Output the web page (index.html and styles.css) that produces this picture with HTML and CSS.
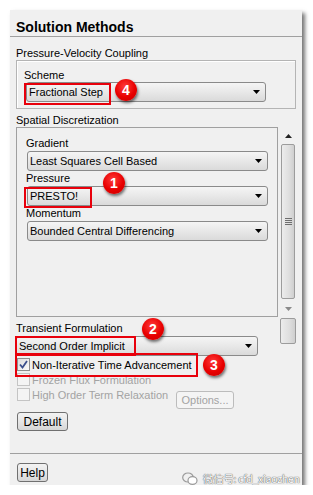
FILE: index.html
```html
<!DOCTYPE html>
<html lang="en">
<head>
    <meta charset="UTF-8">
    <title>Solution Methods</title>
    <link rel="stylesheet" href="styles.css">
</head>
<body>

<div class="panel">
    <div class="title">Solution Methods</div>

    <div class="content">
        <div class="label section">Pressure-Velocity Coupling</div>
        <div class="group">
            <div class="label">Scheme</div>
            <div class="select scheme">
                <span>Fractional Step</span>
                <svg class="arrow" width="7" height="4" viewBox="0 0 7 4"><polygon points="0,0 7,0 3.5,4" fill="#000"/></svg>
            </div>
        </div>

        <div class="label spatial-title">Spatial Discretization</div>
        <div class="scroll-box">
            <div class="scroll-area">
                <div class="field">
                    <div class="label">Gradient</div>
                    <div class="select">
                        <span>Least Squares Cell Based</span>
                        <svg class="arrow" width="7" height="4" viewBox="0 0 7 4"><polygon points="0,0 7,0 3.5,4" fill="#000"/></svg>
                    </div>
                </div>
                <div class="field">
                    <div class="label">Pressure</div>
                    <div class="select">
                        <span>PRESTO!</span>
                        <svg class="arrow" width="7" height="4" viewBox="0 0 7 4"><polygon points="0,0 7,0 3.5,4" fill="#000"/></svg>
                    </div>
                </div>
                <div class="field">
                    <div class="label">Momentum</div>
                    <div class="select">
                        <span>Bounded Central Differencing</span>
                        <svg class="arrow" width="7" height="4" viewBox="0 0 7 4"><polygon points="0,0 7,0 3.5,4" fill="#000"/></svg>
                    </div>
                </div>
            </div>
            <div class="scrollbar">
                <div class="sb-btn">
                    <svg width="7" height="4" viewBox="0 0 7 4"><polygon points="0,4 7,4 3.5,0" fill="#222"/></svg>
                </div>
                <div class="sb-thumb">
                    <span class="grip"></span>
                </div>
                <div class="sb-btn">
                    <svg width="7" height="4" viewBox="0 0 7 4"><polygon points="0,0 7,0 3.5,4" fill="#8a8a8a"/></svg>
                </div>
            </div>
        </div>

        <div class="label transient">Transient Formulation</div>
        <div class="select transient-select">
            <span>Second Order Implicit</span>
            <svg class="arrow" width="7" height="4" viewBox="0 0 7 4"><polygon points="0,0 7,0 3.5,4" fill="#000"/></svg>
        </div>

        <div class="checks">
            <div class="check">
                <span class="box">
                    <svg width="9" height="9" viewBox="0 0 9 9"><path d="M1 4.5 L3.5 7.5 L8 1" fill="none" stroke="#3b4f8c" stroke-width="1.8"/></svg>
                </span>
                <span>Non-Iterative Time Advancement</span>
            </div>
            <div class="check disabled">
                <span class="box"></span>
                <span>Frozen Flux Formulation</span>
            </div>
            <div class="check disabled">
                <div class="check-label">
                    <span class="box"></span>
                    <span>High Order Term Relaxation</span>
                </div>
                <button class="btn options">Options...</button>
            </div>
        </div>

        <button class="btn default">Default</button>
    </div>

    <div class="footer">
        <button class="btn help">Help</button>
    </div>

    <!-- outer panel scrollbar piece -->
    <div class="outer-thumb"></div>

    <!-- annotations -->
    <div class="mark mark-4"></div>
    <div class="mark mark-1"></div>
    <div class="mark mark-2"></div>
    <div class="mark mark-3"></div>
    <div class="badge badge-4">4</div>
    <div class="badge badge-1">1</div>
    <div class="badge badge-2">2</div>
    <div class="badge badge-3">3</div>

    <div class="watermark">
        <svg width="16" height="14" viewBox="0 0 16 14">
            <ellipse cx="6" cy="5.5" rx="5.3" ry="4.5" fill="none" stroke="#9a9a9a" stroke-width="1.2"/>
            <ellipse cx="10.5" cy="8.5" rx="4.5" ry="3.8" fill="#fff" stroke="#9a9a9a" stroke-width="1.2"/>
        </svg>
        <span>微信号: cfd_xiaozhen</span>
    </div>
</div>

</body>
</html>
```

FILE: styles.css
```css
body {
    margin: 0;
    background: #fff;
    font-family: "Liberation Sans", Arial, sans-serif;
    font-size: 11px;
    color: #000;
}

.panel {
    position: relative;
    margin: 10px 0 0 10px;
    width: 292px;
    height: 475px;
    background: #f0f0f0;
    box-shadow: 3px 3px 4px rgba(0, 0, 0, 0.55);
    display: flex;
    flex-direction: column;
}

.title {
    height: 27px;
    box-sizing: border-box;
    padding: 9px 0 0 6px;
    line-height: 16px;
    font-size: 14px;
    font-weight: bold;
    border-bottom: 1px solid #a0a0a0;
}

.content {
    flex: 1;
    padding: 0 6px;
}

.label {
    line-height: 14px;
    white-space: nowrap;
}

.label.section {
    margin-top: 9px;
}

.group {
    height: 49px;
    box-sizing: border-box;
    border: 1px solid #b4b4b4;
    box-shadow: inset 1px 1px 0 #fff;
    padding: 7px 0 0 7px;
}

.select {
    height: 20px;
    box-sizing: border-box;
    border: 1px solid #8a8a8a;
    border-radius: 3px;
    background: linear-gradient(#f5f5f5, #e8e8e8 50%, #dadada);
    display: flex;
    align-items: center;
    justify-content: space-between;
    padding: 0 5px 0 2px;
    white-space: nowrap;
}

.select.scheme {
    width: 240px;
    margin-left: 2px;
}

.spatial-title {
    margin-top: 4px;
}

.scroll-box {
    height: 190px;
    display: flex;
    gap: 2px;
}

.scroll-area {
    width: 262px;
    box-sizing: border-box;
    border: 1px solid #a0a0a0;
    padding: 8px 0 0 10px;
}

.field .label {
    margin-left: -1px;
    margin-bottom: 1px;
}

.field .select {
    width: 241px;
}

.scrollbar {
    width: 16px;
    display: flex;
    flex-direction: column;
}

.sb-btn {
    height: 17px;
    display: flex;
    align-items: center;
    justify-content: center;
}

.sb-thumb {
    flex: 1;
    margin: 0 1px 1px;
    border: 1px solid #9c9c9c;
    border-radius: 2px;
    background: linear-gradient(90deg, #ececec, #dedede 60%, #cfcfcf);
    display: flex;
    align-items: center;
    justify-content: center;
}

.grip {
    width: 7px;
    height: 7px;
    background: repeating-linear-gradient(#6e6e6e 0 1px, transparent 1px 2px);
}

.transient {
    margin-top: 4px;
    margin-bottom: 1px;
}

.transient-select {
    width: 242px;
}

.checks {
    margin-top: 1px;
}

.check {
    height: 15px;
    display: flex;
    align-items: center;
    gap: 2px;
    white-space: nowrap;
}

.check-label {
    width: 158px;
    display: flex;
    align-items: center;
    gap: 2px;
}

.box {
    width: 13px;
    height: 13px;
    box-sizing: border-box;
    margin-left: 1px;
    border: 1px solid #8e8f8f;
    background: linear-gradient(135deg, #dcdcdc, #fbfbfb);
    display: flex;
    align-items: center;
    justify-content: center;
}

.check.disabled {
    color: #a3a3a3;
}

.check.disabled .box {
    border-color: #c4c4c4;
    background: #f4f4f4;
}

.btn {
    font-family: "Liberation Sans", Arial, sans-serif;
    font-size: 11px;
    color: #000;
    border: 1px solid #707070;
    border-radius: 3px;
    background: linear-gradient(#f3f3f3, #e6e6e6 50%, #d6d6d6);
    padding: 0;
    height: 19px;
}

.btn.options {
    width: 58px;
    height: 18px;
    margin-top: 4px;
    align-self: flex-start;
    color: #a3a3a3;
    border-color: #bcbcbc;
    background: #f4f4f4;
}

.btn.default {
    display: block;
    width: 51px;
    margin: 10px 0 0 1px;
    font-size: 12px;
}

.footer {
    height: 32px;
    box-sizing: border-box;
    border-top: 1px solid #a0a0a0;
    padding: 9px 0 0 7px;
}

.btn.help {
    width: 31px;
    font-size: 12px;
}

.outer-thumb {
    position: absolute;
    left: 270px;
    top: 308px;
    width: 16px;
    height: 26px;
    box-sizing: border-box;
    border: 1px solid #9c9c9c;
    border-radius: 2px;
    background: linear-gradient(90deg, #ececec, #dedede 60%, #cfcfcf);
}

.mark {
    position: absolute;
    box-sizing: border-box;
    border: 2px solid #e8000b;
}

.mark-4 { left: 14px; top: 73px; width: 87px; height: 22px; }
.mark-1 { left: 14px; top: 177px; width: 68px; height: 21px; }
.mark-2 { left: 5px; top: 326px; width: 121px; height: 20px; }
.mark-3 { left: 5px; top: 343px; width: 183px; height: 24px; }

.badge {
    position: absolute;
    width: 22px;
    height: 22px;
    border-radius: 50%;
    background: radial-gradient(circle at 45% 35%, #ff3b3b, #e80000 55%, #c40000);
    box-shadow: 1px 2px 3px rgba(0, 0, 0, 0.55);
    color: #fff;
    font-weight: bold;
    font-size: 14px;
    line-height: 22px;
    text-align: center;
}

.badge-4 { left: 105px; top: 69px; }
.badge-1 { left: 93px; top: 162px; }
.badge-2 { left: 132px; top: 308px; }
.badge-3 { left: 193px; top: 344px; }

.watermark {
    position: absolute;
    left: 172px;
    top: 461px;
    display: flex;
    align-items: center;
    gap: 5px;
    font-family: "Noto Sans CJK SC", sans-serif;
    font-size: 10.5px;
    letter-spacing: -0.3px;
    color: #fff;
    text-shadow: 0 0 1px #555, 0 0 1px #555;
    white-space: nowrap;
}
```
